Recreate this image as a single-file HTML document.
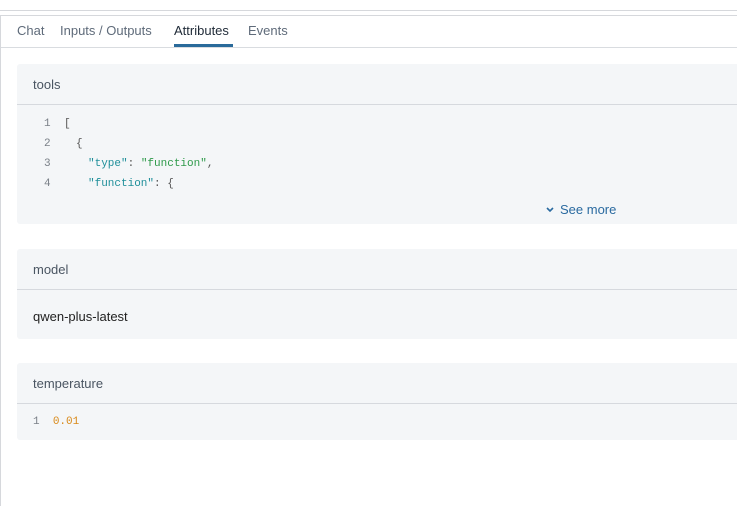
<!DOCTYPE html>
<html><head><style>
body{margin:0;width:737px;height:494px;background:#fff;font-family:"Liberation Sans",sans-serif;overflow:hidden;position:relative}
.l1{position:absolute;left:0;right:0;top:10px;height:1px;background:#d6d8dc}
.frame{position:absolute;left:0;top:15px;width:740px;height:490px;border-left:1px solid #d6d8dc;border-top:1px solid #d6d8dc}
.tabs{position:absolute;left:0;top:0;right:0;height:31px;border-bottom:1px solid #d9dce0}
.tab{position:absolute;top:7px;font-size:13px;color:#5f6b7a}
.tab.a{color:#1f2a37}
.ul{position:absolute;left:173px;top:28px;width:59px;height:3px;background:#2a6a9a}
.card{position:absolute;left:17px;width:730px;background:#f4f6f8;border-radius:3px}
.hd{height:40px;border-bottom:1px solid #d6d9de;font-size:13px;color:#4a5562;line-height:41px;padding-left:16px}
.code{font-family:"Liberation Mono",monospace;font-size:11px;position:absolute}
.ln{position:absolute;color:#7a8088;}
.k{color:#1f8f9a}.s{color:#2e9a4a}.p{color:#555}
</style></head><body>
<div class="l1"></div>
<div class="frame">
<div class="tabs">
<span class="tab" style="left:16px">Chat</span>
<span class="tab" style="left:59px">Inputs / Outputs</span>
<span class="tab a" style="left:173px">Attributes</span>
<span class="tab" style="left:247px">Events</span>
<div class="ul"></div>
</div>
</div>
<div class="card" style="top:64px;height:160px">
<div class="hd">tools</div>
<div class="code" style="top:54px;left:0;width:600px">
<div style="position:absolute;top:0;left:27px" class="ln">1</div><div style="position:absolute;top:0;left:47px" class="p">[</div>
<div style="position:absolute;top:20px;left:27px" class="ln">2</div><div style="position:absolute;top:20px;left:59px" class="p">{</div>
<div style="position:absolute;top:40px;left:27px" class="ln">3</div><div style="position:absolute;top:40px;left:71px;white-space:pre"><span class="k">"type"</span><span class="p">: </span><span class="s">"function"</span><span class="p">,</span></div>
<div style="position:absolute;top:60px;left:27px" class="ln">4</div><div style="position:absolute;top:60px;left:71px;white-space:pre"><span class="k">"function"</span><span class="p">: {</span></div>
</div>
<div style="position:absolute;left:528px;top:138px;font-size:13px;color:#2a6aa0"><svg width="10" height="8" style="margin-right:5px"><path d="M2 2l3 3 3-3" stroke="#2a6aa0" stroke-width="1.6" fill="none"/></svg>See more</div>
</div>
<div class="card" style="top:249px;height:90px">
<div class="hd">model</div>
<div style="position:absolute;left:16px;top:60px;font-size:13px;color:#222">qwen-plus-latest</div>
</div>
<div class="card" style="top:363px;height:77px">
<div class="hd">temperature</div>
<div class="code" style="top:53px;left:16px;white-space:pre"><span class="ln" style="position:static">1</span>  <span style="color:#d98a1a">0.01</span></div>
</div>
</body></html>
